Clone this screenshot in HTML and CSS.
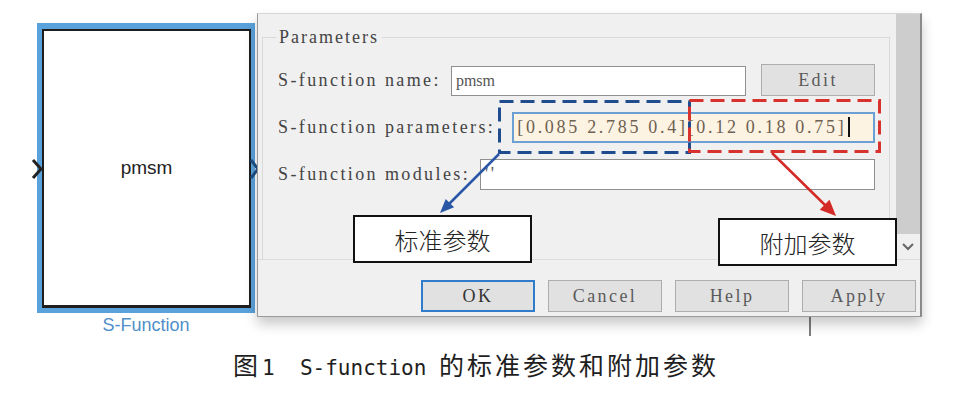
FILE: index.html
```
<!DOCTYPE html>
<html>
<head>
	<meta charset="UTF-8">
	<link rel="stylesheet" href="styles.css">
</head>
<body>

<div class="figure">
	<div class="stage">

		<div class="block">
			<div class="blockIn">pmsm</div>
		</div>
		<div class="blockLabel">S-Function</div>

		<svg class="ports" width="270" height="340" viewBox="0 0 270 340">
			<polyline points="33,160 41,169 33,178" fill="none" stroke="#222" stroke-width="3"/>
			<polyline points="251,160 258,169 251,178" fill="none" stroke="#1d4f84" stroke-width="3"/>
		</svg>

		<u class="backLine"></u>

		<div class="dialog">
			<div class="dlgMain">
				<div class="dlgBody">
					<div class="group">
						<span class="legend">Parameters</span>

						<div class="row">
							<span class="lbl">S-function name:</span>
							<div class="field fieldName">pmsm</div>
							<b class="btn btnEdit">Edit</b>
						</div>
						<div class="row">
							<span class="lbl">S-function parameters:</span>
							<div class="field fieldParams">[0.085 2.785 0.4][0.12 0.18 0.75]<i class="caret"></i></div>
						</div>
						<div class="row">
							<span class="lbl">S-function modules:</span>
							<div class="field">''</div>
						</div>
					</div>
				</div>
				<div class="scrollBar">
					<div class="scrollThumb"></div>
					<div class="scrollDown">
						<svg width="12" height="8" viewBox="0 0 12 8"><polyline points="1,1 6,6 11,1" fill="none" stroke="#666" stroke-width="2"/></svg>
					</div>
				</div>
			</div>
			<div class="dlgButtons">
				<b class="btn btnDefault">OK</b>
				<b class="btn">Cancel</b>
				<b class="btn">Help</b>
				<b class="btn">Apply</b>
			</div>
		</div>

		<svg class="marks" width="966" height="340" viewBox="0 0 966 340">
			<rect x="499.5" y="101.5" width="190" height="51" fill="none" stroke="#1e4c8e" stroke-width="3" stroke-dasharray="14 7"/>
			<rect x="689.5" y="100.5" width="190" height="51" fill="none" stroke="#d8322f" stroke-width="3" stroke-dasharray="14 7"/>

			<line x1="499" y1="154" x2="448" y2="205" stroke="#2a56a6" stroke-width="2.5"/>
			<polygon points="440,213 454.1,207.3 445.7,198.9" fill="#2a56a6"/>

			<line x1="772" y1="153" x2="826" y2="206" stroke="#d42a27" stroke-width="2.5"/>
			<polygon points="836,216 819.7,209.8 829.5,199.8" fill="#d42a27"/>
		</svg>

		<div class="note noteStd">标准参数</div>
		<div class="note noteExtra">附加参数</div>
	</div>

	<p class="caption"><span class="capCjk capFig">图</span><span class="capLatin">1  S-function </span><span class="capCjk">的标准参数和附加参数</span></p>
</div>

</body>
</html>
```

FILE: styles.css
```
		html, body
		{
			margin: 0;
			padding: 0;
			background-color: #fff;
			color: #222;
			font-family: "Liberation Sans", Arial, sans-serif;
		}

		.figure
		{
			width: 966px;
			height: 397px;
			overflow: hidden;
		}

		.stage
		{
			position: relative;
			height: 340px;
		}

		/* simulink block */
		.block
		{
			position: absolute;
			left: 37px;
			top: 23px;
			width: 218px;
			height: 290px;
			box-sizing: border-box;
			padding: 6px 4px 5px 5px;
			background-color: #5aa2db;
		}
		.blockIn
		{
			height: 100%;
			box-sizing: border-box;
			border: 2px solid #1e1e1e;
			border-width: 2px 2px 3px 2px;
			background-color: #fff;
			display: flex;
			align-items: center;
			justify-content: center;
			font-size: 19px;
			color: #222;
		}
		.blockLabel
		{
			position: absolute;
			left: 37px;
			top: 314px;
			width: 218px;
			text-align: center;
			font-size: 18px;
			line-height: 22px;
			color: #4f8fc9;
		}
		.ports
		{
			position: absolute;
			left: 0;
			top: 0;
		}

		.backLine
		{
			position: absolute;
			left: 809px;
			top: 312px;
			width: 2px;
			height: 24px;
			background-color: #7d7d7d;
		}

		/* dialog window */
		.dialog
		{
			position: absolute;
			left: 257px;
			top: 13px;
			width: 665px;
			height: 304px;
			box-sizing: border-box;
			display: flex;
			flex-direction: column;
			background-color: #f0f0f0;
			border: 1px solid #9a9a9a;
			border-top-color: #d6d6d6;
			border-right: 2px solid #8a8a8a;
			box-shadow: 0 7px 12px rgba(0, 0, 0, 0.22);
			font-family: "Liberation Serif", "Times New Roman", serif;
			font-size: 18px;
			letter-spacing: 2.4px;
			color: #444;
		}
		.dlgMain
		{
			height: 245px;
			display: flex;
		}
		.dlgBody
		{
			flex: 1;
			padding: 23px 6px 0 4px;
		}
		.group
		{
			position: relative;
			height: 100%;
			box-sizing: border-box;
			border: 1px solid #d9d9d9;
			border-bottom: none;
			padding: 26px 14px 0 15px;
		}
		.legend
		{
			position: absolute;
			left: 13px;
			top: -11px;
			padding: 0 3px;
			line-height: 20px;
			background-color: #f0f0f0;
			letter-spacing: 2px;
		}
		.row
		{
			display: flex;
			align-items: center;
			gap: 10px;
			height: 32px;
			margin-bottom: 15px;
		}
		.lbl
		{
			white-space: pre;
		}
		.field
		{
			flex: 1;
			height: 31px;
			box-sizing: border-box;
			border: 1px solid #8f8f8f;
			background-color: #fff;
			padding: 0 4px;
			display: flex;
			align-items: center;
			color: #555;
			white-space: pre;
		}
		.fieldName
		{
			height: 30px;
			margin-top: 2px;
			font-size: 16px;
			letter-spacing: 0;
		}
		.fieldParams
		{
			margin-left: 7px;
			border: 2px solid #6c9fd3;
			background-color: #fdf3e2;
			padding: 0 2px 0 3px;
			font-size: 18px;
			letter-spacing: 2.7px;
			color: #6d6152;
		}
		.caret
		{
			display: inline-block;
			width: 2px;
			height: 20px;
			margin-left: 2px;
			background-color: #111;
		}

		.btn
		{
			font-weight: normal;
			width: 114px;
			height: 32px;
			box-sizing: border-box;
			display: flex;
			align-items: center;
			justify-content: center;
			background-color: #e1e1e1;
			border: 1px solid #adadad;
			color: #5a5a5a;
		}
		.btnEdit
		{
			margin-left: 5px;
		}
		.btnDefault
		{
			border: 2px solid #2f7ccb;
			color: #333;
		}

		.scrollBar
		{
			width: 24px;
			display: flex;
			flex-direction: column;
			background-color: #f0f0f0;
		}
		.scrollThumb
		{
			height: 220px;
			background-color: #cdcdcd;
		}
		.scrollDown
		{
			flex: 1;
			display: flex;
			align-items: center;
			justify-content: center;
		}

		.dlgButtons
		{
			flex: 1;
			display: flex;
			justify-content: flex-end;
			gap: 13px;
			padding: 20px 4px 0 0;
			border-top: 1px solid #dcdcdc;
		}

		/* annotations */
		.marks
		{
			position: absolute;
			left: 0;
			top: 0;
		}
		.note
		{
			position: absolute;
			width: 179px;
			height: 48px;
			box-sizing: border-box;
			border: 2px solid #111;
			background-color: #fff;
			display: flex;
			align-items: center;
			justify-content: center;
			font-family: "Noto Sans CJK SC", sans-serif;
			font-weight: 300;
			font-size: 24px;
			color: #222;
		}
		.noteStd
		{
			left: 353px;
			top: 215px;
		}
		.noteExtra
		{
			left: 718px;
			top: 218px;
		}

		.caption
		{
			margin: 9px 0 0 0;
			padding-left: 233px;
			line-height: 30px;
			white-space: pre;
			color: #1e1e1e;
		}
		.capCjk
		{
			font-family: "Noto Sans CJK SC", sans-serif;
			font-size: 25px;
			letter-spacing: 3px;
		}
		.capFig
		{
			letter-spacing: 4px;
		}
		.capLatin
		{
			font-family: "DejaVu Sans Mono", monospace;
			font-size: 21px;
		}
```
